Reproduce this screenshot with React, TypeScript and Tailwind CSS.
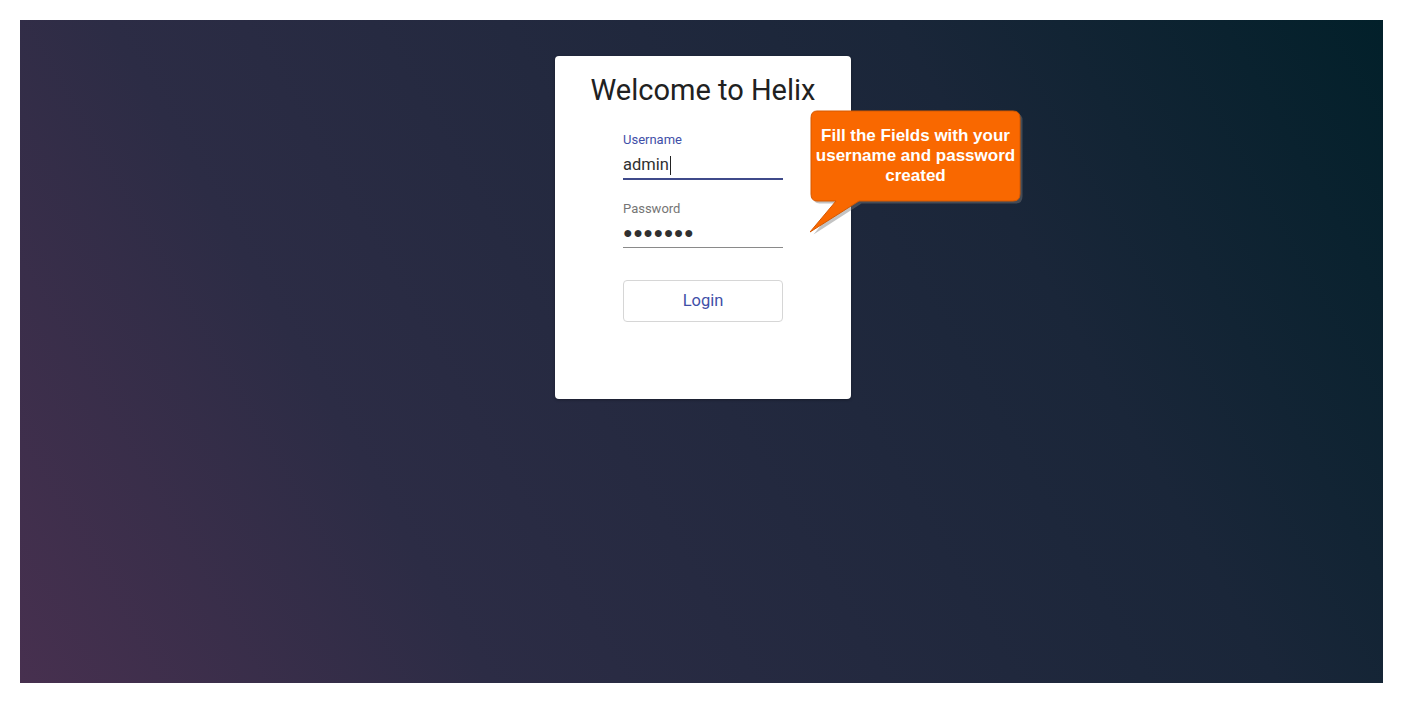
import React from 'react';

const font = { fontFamily: 'Roboto, "Liberation Sans", sans-serif' };

// Orange speech bubble pointing at the login fields
const Callout: React.FC = () => (
  <div className="absolute left-[810px] top-[110px] w-[214px] h-[126px]">
    <svg width="214" height="126" viewBox="0 0 214 126" className="absolute left-0 top-0">
      <path
        d="M8 2 H204 Q211 2 211 9 V85 Q211 92 204 92 H50 L2 123 L27 92 H8 Q2 92 2 85 V9 Q2 2 8 2 Z"
        fill="#7a7a7a"
        opacity="0.45"
        transform="translate(1.5 1.5)"
      />
      <path
        d="M7 1 H203 Q210 1 210 8 V84 Q210 91 203 91 H49 L0 122 L26 91 H7 Q1 91 1 84 V8 Q1 1 7 1 Z"
        fill="#f96800"
        stroke="#d65800"
        strokeWidth="1"
      />
    </svg>
    <div
      className="relative w-[211px] pt-[16px] text-center text-white font-bold text-[17px] leading-[20px]"
      style={{ fontFamily: '"Liberation Sans", Arial, sans-serif' }}
    >
      Fill the Fields with your
      <br />
      username and password
      <br />
      created
    </div>
  </div>
);

export default function App() {
  return (
    <div className="w-[1404px] h-[704px] bg-white pt-[20px] pl-[20px] pr-[21px] pb-[21px]">
      <div className="relative w-full h-full bg-[linear-gradient(60deg,#47304f_0%,#2c2c45_27%,#1a2639_72%,#02202a_100%)]">
        <div className="flex justify-center pt-[36px] pl-[3px]">
          <div
            className="w-[296px] h-[343px] bg-white rounded-[4px] flex flex-col items-center shadow-[0_1px_3px_rgba(0,0,0,0.3)]"
            style={font}
          >
            <h1 className="mt-[16px] text-[29px] leading-[36px] text-[#212121] font-normal">Welcome to Helix</h1>
            <div className="w-[160px] mt-[24px]">
              <div className="text-[13px] leading-[16px] text-[#3f4fa8]">Username</div>
              <div className="mt-[5px] h-[24px] text-[16.5px] leading-[24px] text-[#303030] flex items-center">
                admin<span className="inline-block w-px h-[19px] bg-[#222] ml-[1px]" />
              </div>
              <div className="mt-[1px] h-[2px] bg-[#3f4a8a]" />
              <div className="mt-[21px] text-[13px] leading-[16px] text-[#757575]">Password</div>
              <div className="mt-[4px] h-[26px] text-[16px] leading-[24px] text-[#303030] tracking-[0.5px]">●●●●●●●</div>
              <div className="h-px bg-[#8a8a8a]" />
              <button className="mt-[32px] w-[160px] h-[42px] border border-[#d6d6d6] rounded-[4px] bg-white text-[16.5px] text-[#3f4fa8]">
                Login
              </button>
            </div>
          </div>
        </div>
        <div className="absolute inset-0 -left-[20px] -top-[20px]">
          <Callout />
        </div>
      </div>
    </div>
  );
}
